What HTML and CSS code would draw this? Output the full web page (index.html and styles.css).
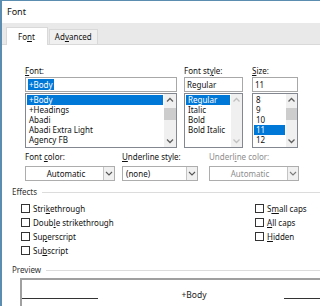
FILE: index.html
```html
<!DOCTYPE html>
<html lang="en">
<head>
    <meta charset="UTF-8">
    <title>Font</title>
    <link rel="stylesheet" href="styles.css">
</head>
<body>

    <div class="ventana">
        <div class="titulo">Font</div>

        <div class="pestanas">
            <div class="pestana activa">Fo<u>n</u>t</div>
            <div class="pestana">Ad<u>v</u>anced</div>
        </div>

        <div class="pagina">
            <div class="selectores">
                <div class="col col-fuente">
                    <div class="etiqueta"><u>F</u>ont:</div>
                    <div class="entrada"><span class="marcado">+Body</span></div>
                    <div class="lista">
                        <div class="items">
                            <div class="item sel">+Body</div>
                            <div class="item">+Headings</div>
                            <div class="item">Abadi</div>
                            <div class="item">Abadi Extra Light</div>
                            <div class="item">Agency FB</div>
                        </div>
                        <div class="barra">
                            <svg class="flecha" width="12" height="12" viewBox="0 0 12 12"><polyline points="3,7.5 6,4.5 9,7.5" /></svg>
                            <div class="pulgar"></div>
                            <div class="relleno"></div>
                            <svg class="flecha" width="12" height="12" viewBox="0 0 12 12"><polyline points="3,4.5 6,7.5 9,4.5" /></svg>
                        </div>
                    </div>
                </div>

                <div class="col col-estilo">
                    <div class="etiqueta">Font st<u>y</u>le:</div>
                    <div class="entrada">Regular</div>
                    <div class="lista">
                        <div class="items">
                            <div class="item sel">Regular</div>
                            <div class="item">Italic</div>
                            <div class="item">Bold</div>
                            <div class="item">Bold Italic</div>
                        </div>
                        <div class="barra inactiva">
                            <svg class="flecha" width="11" height="12" viewBox="0 0 11 12"><polyline points="2.5,7.5 5.5,4.5 8.5,7.5" /></svg>
                            <div class="relleno"></div>
                            <svg class="flecha" width="11" height="12" viewBox="0 0 11 12"><polyline points="2.5,4.5 5.5,7.5 8.5,4.5" /></svg>
                        </div>
                    </div>
                </div>

                <div class="col col-tamano">
                    <div class="etiqueta"><u>S</u>ize:</div>
                    <div class="entrada">11</div>
                    <div class="lista">
                        <div class="items">
                            <div class="item">8</div>
                            <div class="item">9</div>
                            <div class="item">10</div>
                            <div class="item sel">11</div>
                            <div class="item">12</div>
                        </div>
                        <div class="barra">
                            <svg class="flecha" width="11" height="12" viewBox="0 0 11 12"><polyline points="2.5,7.5 5.5,4.5 8.5,7.5" /></svg>
                            <div class="pulgar"></div>
                            <div class="relleno"></div>
                            <svg class="flecha" width="11" height="12" viewBox="0 0 11 12"><polyline points="2.5,4.5 5.5,7.5 8.5,4.5" /></svg>
                        </div>
                    </div>
                </div>
            </div>

            <div class="combos">
                <div class="campo c-color">
                    <div class="etiqueta">Font <u>c</u>olor:</div>
                    <div class="combo centrado">
                        <span class="valor">Automatic</span>
                        <span class="boton"><svg width="10" height="13" viewBox="0 0 10 13"><polyline points="2,5 5,8 8,5" /></svg></span>
                    </div>
                </div>
                <div class="campo c-subrayado">
                    <div class="etiqueta"><u>U</u>nderline style:</div>
                    <div class="combo">
                        <span class="valor">(none)</span>
                        <span class="boton"><svg width="10" height="13" viewBox="0 0 10 13"><polyline points="2,5 5,8 8,5" /></svg></span>
                    </div>
                </div>
                <div class="campo c-colorsub deshabilitado">
                    <div class="etiqueta">Underl<u>i</u>ne color:</div>
                    <div class="combo centrado">
                        <span class="valor">Automatic</span>
                        <span class="boton"><svg width="10" height="13" viewBox="0 0 10 13"><polyline points="2,5 5,8 8,5" /></svg></span>
                    </div>
                </div>
            </div>

            <div class="grupo">Effects</div>
            <div class="efectos">
                <div class="efectos-col">
                    <label class="casilla"><span class="caja"></span>Stri<u>k</u>ethrough</label>
                    <label class="casilla"><span class="caja"></span>Doub<u>l</u>e strikethrough</label>
                    <label class="casilla"><span class="caja"></span>Su<u>p</u>erscript</label>
                    <label class="casilla"><span class="caja"></span>Su<u>b</u>script</label>
                </div>
                <div class="efectos-col">
                    <label class="casilla"><span class="caja"></span>S<u>m</u>all caps</label>
                    <label class="casilla"><span class="caja"></span><u>A</u>ll caps</label>
                    <label class="casilla"><span class="caja"></span><u>H</u>idden</label>
                </div>
            </div>

            <div class="grupo preview-titulo">Preview</div>
            <div class="vista">
                <span class="linea izq"></span>
                <span class="muestra">+Body</span>
                <span class="linea der"></span>
            </div>
        </div>
    </div>

</body>
</html>
```

FILE: styles.css
```css
body {
    margin: 0;
    font-family: "Noto Sans", "Open Sans", sans-serif;
    font-size: 8px;
    color: #111;
    background-color: #fff;
}

u {
    text-decoration-thickness: 1px;
    text-underline-offset: 1px;
}

.ventana {
    width: 320px;
    height: 306px;
    box-sizing: border-box;
    border-top: 1px solid #5b8db0;
    border-left: 2px solid #5b8db0;
    background-color: #fff;
    overflow: hidden;
}

.titulo {
    height: 22px;
    line-height: 22px;
    padding-left: 5px;
    font-size: 9px;
    color: #111;
}

/* pestañas */
.pestanas {
    height: 22px;
    box-sizing: border-box;
    background-color: #e9e9e9;
    border-bottom: 1px solid #d9d9d9;
    display: flex;
    align-items: flex-end;
    padding-left: 4px;
}

.pestana {
    height: 15px;
    line-height: 14px;
    box-sizing: border-box;
    padding: 0 5px;
    background-color: #f0f0f0;
    border: 1px solid #d9d9d9;
    border-bottom: none;
    margin-left: 1px;
}

.pestana.activa {
    height: 18px;
    line-height: 17px;
    background-color: #fff;
    padding: 0 12px 0 11px;
    margin-left: 0;
    margin-bottom: -1px;
}

.pagina {
    padding: 21px 0 0 10px;
}

.etiqueta {
    height: 10px;
    line-height: 10px;
    margin-bottom: 1px;
}

/* listas de fuente, estilo y tamaño */
.selectores {
    display: flex;
    margin-left: 13px;
}

.col-fuente { width: 152px; }
.col-estilo { width: 59px; margin-left: 7px; }
.col-tamano { width: 46px; margin-left: 9px; }

.entrada {
    height: 15px;
    line-height: 13px;
    box-sizing: border-box;
    border: 1px solid #a8a8a8;
    padding-left: 2px;
}

.marcado {
    background-color: #0078d7;
    color: #fff;
    padding: 0 1px;
}

.lista {
    height: 55px;
    box-sizing: border-box;
    border: 1px solid #828790;
    margin-top: 1px;
    display: flex;
}

.items {
    flex: 1;
    padding: 1px;
}

.item {
    height: 10px;
    line-height: 10px;
    padding-left: 2px;
    white-space: nowrap;
}

.item.sel {
    background-color: #0078d7;
    color: #fff;
}

.barra {
    width: 12px;
    background-color: #f0f0f0;
    display: flex;
    flex-direction: column;
}

.col-estilo .barra,
.col-tamano .barra {
    width: 11px;
}

.flecha {
    display: block;
    fill: none;
    stroke: #606060;
    stroke-width: 1.3;
}

.barra.inactiva .flecha {
    stroke: #c0c0c0;
}

.pulgar {
    height: 12px;
    margin: 2px 0 0;
    background-color: #cdcdcd;
}

.relleno {
    flex: 1;
}

/* combos */
.combos {
    display: flex;
    margin: 4px 0 0 13px;
}

.campo .etiqueta {
    margin-bottom: 4px;
}

.c-color { width: 90px; }
.c-subrayado { width: 76px; margin-left: 7px; }
.c-colorsub { width: 90px; margin-left: 11px; }

.combo {
    height: 15px;
    box-sizing: border-box;
    border: 1px solid #adadad;
    display: flex;
    line-height: 13px;
}

.combo .valor {
    flex: 1;
    padding-left: 3px;
}

.combo.centrado .valor {
    text-align: center;
}

.boton {
    width: 10px;
    border-left: 1px solid #c4c4c4;
    background-color: #f0f0f0;
}

.boton svg {
    display: block;
    fill: none;
    stroke: #555;
    stroke-width: 1.1;
}

.deshabilitado {
    color: #8d8d8d;
}

.deshabilitado .boton svg {
    stroke: #7a7a7a;
}

/* grupos */
.grupo {
    display: flex;
    align-items: center;
    height: 10px;
    line-height: 10px;
    margin-top: 6px;
    color: #333;
}

.grupo::after {
    content: "";
    flex: 1;
    height: 1px;
    background-color: #dcdcdc;
    margin-left: 5px;
}

.efectos {
    display: flex;
    margin: 4px 0 0 9px;
}

.efectos-col {
    width: 234px;
}

.efectos-col + .efectos-col {
    width: auto;
}

.casilla {
    display: flex;
    align-items: center;
    height: 14px;
}

.caja {
    width: 9px;
    height: 9px;
    box-sizing: border-box;
    border: 1px solid #333;
    background-color: #fff;
    margin-right: 3px;
}

.preview-titulo {
    margin-top: 8px;
}

.vista {
    margin: 3px 0 0 8px;
    height: 40px;
    border-top: 2px solid #a0a0a0;
    border-left: 2px solid #a0a0a0;
    display: flex;
    align-items: center;
    padding-bottom: 10px;
    box-sizing: border-box;
}

.muestra {
    font-size: 8.5px;
    color: #222;
    margin: 0 auto;
    padding-left: 6px;
}

.linea {
    height: 1px;
    background-color: #333;
    margin-top: 8px;
}

.linea.izq { width: 76px; }
.linea.der { width: 36px; }
```
